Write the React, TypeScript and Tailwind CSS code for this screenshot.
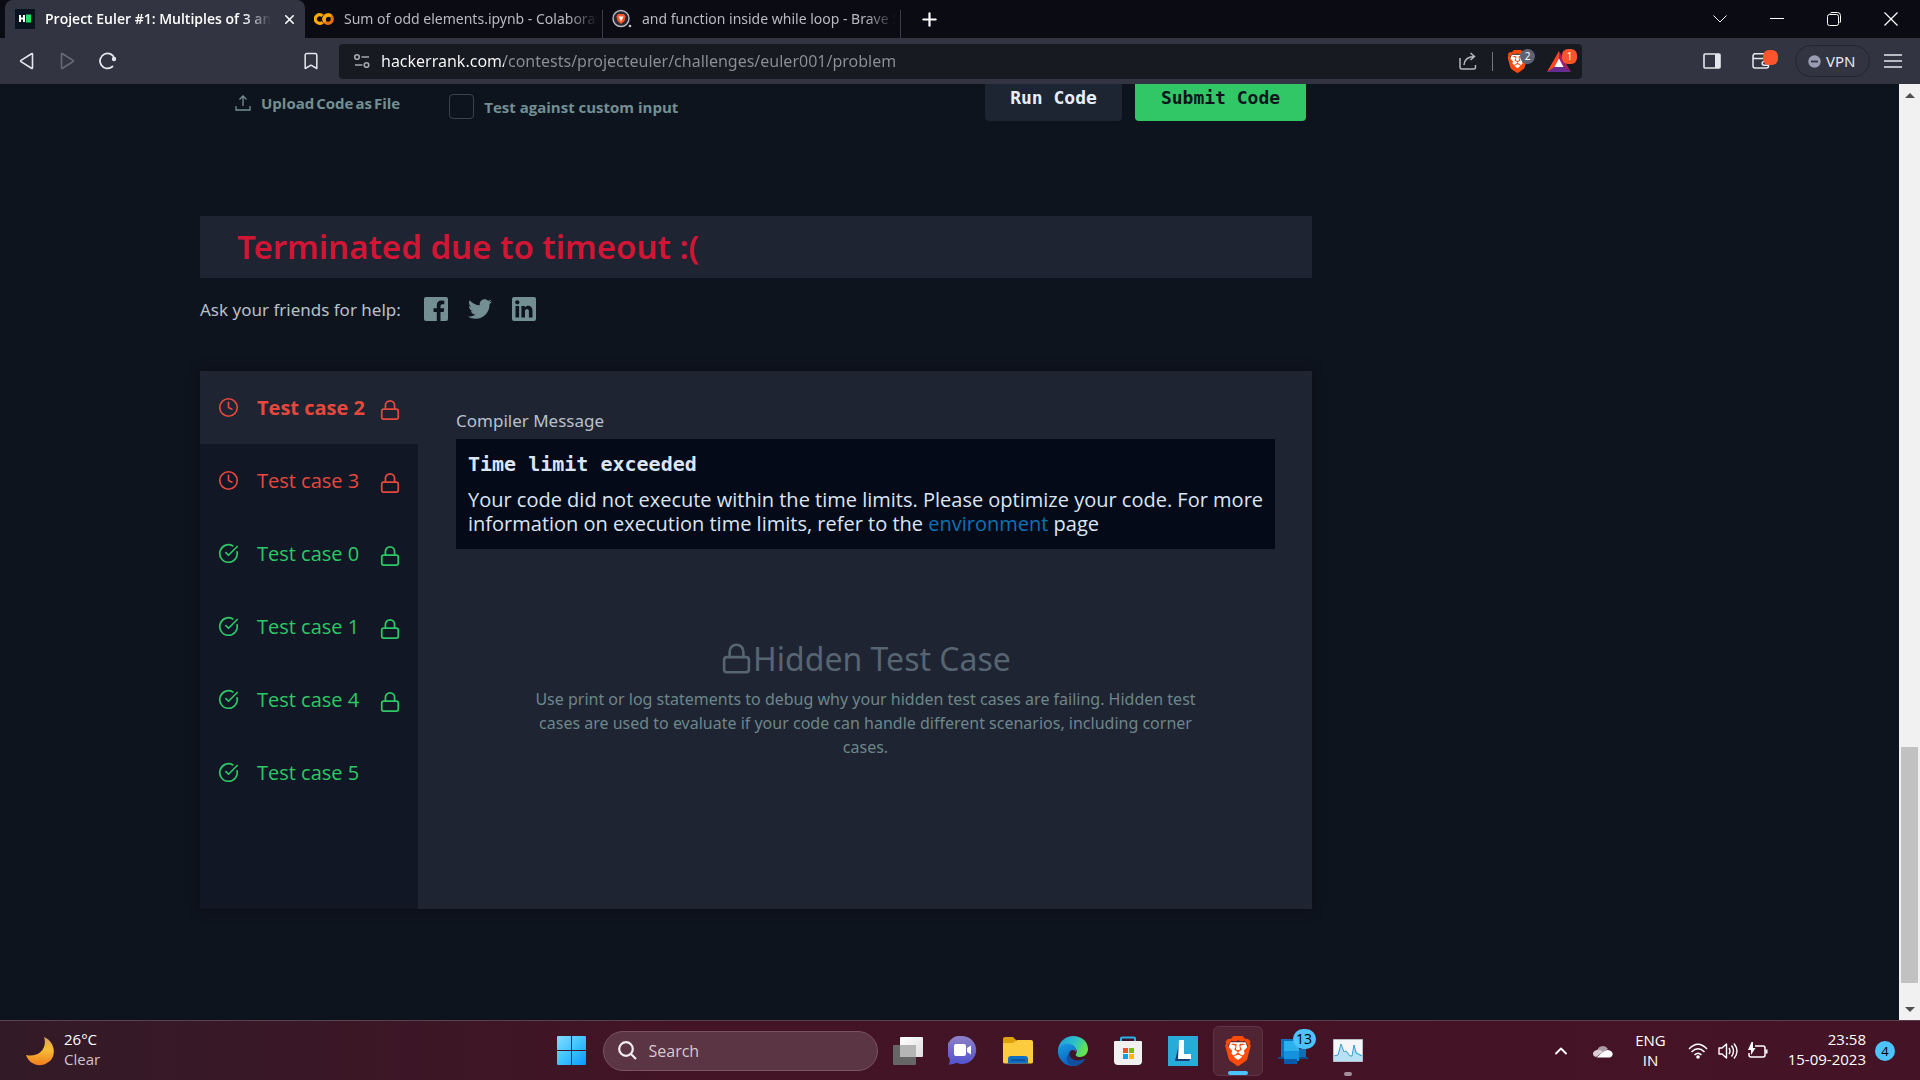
import React from "react";
import { CircleCheckBig, Clock, Lock, Bookmark, X, Plus, ChevronDown, ChevronUp } from "lucide-react";
import { FaTwitter } from "react-icons/fa";
import { SiBrave } from "react-icons/si";

function BraveLion({ size }: { size: number }) {
  return (
    <span className="relative inline-flex">
      <svg className="absolute inset-0" width={size} height={size} viewBox="0 0 24 24" aria-hidden="true">
        <path d="M6 5h12l2 5-3 8-5 4-5-4-3-8z" fill="#fff" />
      </svg>
      <SiBrave size={size} className="relative text-[#fb4b0a]" aria-hidden="true" />
    </span>
  );
}

function HackerRankIcon() {
  return (
    <svg width="20" height="20" viewBox="0 0 20 20" aria-hidden="true">
      <rect width="20" height="20" fill="#0a1420" />
      <path d="M5 6v7M9 6v7M5 9.500h4" stroke="#fff" strokeWidth="2" />
      <rect x="11" y="5.500" width="5" height="8" fill="#1ae26b" />
    </svg>
  );
}

function ColabIcon() {
  return (
    <svg width="20" height="20" viewBox="0 0 20 20" fill="none" strokeWidth="3.200" aria-hidden="true">
      <path d="M8.500 6.800a4.300 4.300 0 1 0 0 6.400" stroke="#f9ab00" />
      <circle cx="14" cy="10" r="4.300" stroke="#e8710a" />
      <path d="M11 13a4.300 4.300 0 0 1 6-6" stroke="#f9ab00" />
    </svg>
  );
}

function BraveSearchIcon() {
  return (
    <svg width="20" height="20" viewBox="0 0 20 20" aria-hidden="true">
      <circle cx="9" cy="9.500" r="8" fill="#fff" fillOpacity=".12" stroke="#b9bac4" strokeWidth="1.400" />
      <path d="M6 5h6l1.500 2.500-1 4.500L9 15l-3.500-3-1-4.500z" fill="#fb542b" />
      <path d="M6.500 7.500h5L9 12.500z" fill="#fff" />
      <circle cx="18" cy="17" r="1.300" fill="#c8c9d0" />
    </svg>
  );
}

const tabs = [
  { title: "Project Euler #1: Multiples of 3 and 5", icon: <HackerRankIcon />, active: true },
  { title: "Sum of odd elements.ipynb - Colaboratory", icon: <ColabIcon />, active: false },
  { title: "and function inside while loop - Brave Search", icon: <BraveSearchIcon />, active: false },
];

function TabStrip() {
  return (
    <div className="flex h-[38px] shrink-0 items-stretch bg-[#0b0b14] pl-[5px]">
      {tabs.map((t) =>
        t.active ? (
          <div key={t.title} className="flex w-[300px] items-center rounded-t-lg bg-[#323442] pr-[6px] pl-[10px]">
            {t.icon}
            <span className="ml-[10px] flex-1 overflow-hidden font-['Open_Sans',sans-serif] text-sm font-semibold whitespace-nowrap text-white [mask-image:linear-gradient(to_right,black_88%,transparent)]">
              {t.title}
            </span>
            <button aria-label="Close tab" className="ml-2 flex h-5 w-5 items-center justify-center text-white">
              <X size={15} strokeWidth={2.5} />
            </button>
          </div>
        ) : (
          <div key={t.title} className="flex w-[298px] items-center">
            <div className="ml-[9px] flex flex-1 items-center gap-[10px] overflow-hidden">
              {t.icon}
              <span className="flex-1 overflow-hidden text-sm whitespace-nowrap text-[#b9bac0] [mask-image:linear-gradient(to_right,black_88%,transparent)]">
                {t.title}
              </span>
            </div>
            <span className="ml-1 h-7 w-px self-end bg-[#3b3c46]" />
          </div>
        ),
      )}
      <button aria-label="New tab" className="ml-4 flex w-6 items-center justify-center text-white">
        <Plus size={21} strokeWidth={2.5} />
      </button>
      <div className="ml-auto flex pr-px text-white">
        <button aria-label="Search tabs" className="flex w-[57px] items-center justify-center">
          <svg width="14" height="8" viewBox="0 0 14 8" fill="none"><path d="M.5.5L7 7 13.500.5" stroke="currentColor" /></svg>
        </button>
        <button aria-label="Minimize" className="flex w-[57px] items-center justify-center">
          <svg width="14" height="14" viewBox="0 0 14 14"><path d="M0 6.500h14" stroke="currentColor" /></svg>
        </button>
        <button aria-label="Restore" className="flex w-[57px] items-center justify-center">
          <svg width="14" height="14" viewBox="0 0 14 14" fill="none" stroke="currentColor">
            <rect x=".5" y="2.500" width="11" height="11" rx="2" />
            <path d="M3 1.500Q3.500.5 5 .5h5.500a3 3 0 0 1 3 3V9q0 1.500-1 2" />
          </svg>
        </button>
        <button aria-label="Close" className="flex w-[57px] items-center justify-center">
          <svg width="14" height="14" viewBox="0 0 14 14"><path d="M.5.5l13 13M13.500.5l-13 13" stroke="currentColor" strokeWidth="1.200" /></svg>
        </button>
      </div>
    </div>
  );
}

function Toolbar() {
  return (
    <div className="flex h-[46px] shrink-0 items-center bg-[#323442] text-[#e6e7ee]">
      <div className="flex w-[339px] shrink-0 items-center pr-[18px] pl-[18px]">
        <button aria-label="Back">
          <svg width="18" height="18" viewBox="0 0 18 18" fill="none" stroke="currentColor" strokeWidth="1.600" strokeLinejoin="round">
            <path d="M14.500 2.200v13.600q0 1-1 .4L3 9.600q-.8-.6 0-1.200L13.500 1.800q1-.6 1 .4z" />
          </svg>
        </button>
        <button aria-label="Forward" className="ml-[22px] text-[#686a78]">
          <svg width="18" height="18" viewBox="0 0 18 18" fill="none" stroke="currentColor" strokeWidth="1.600" strokeLinejoin="round">
            <path d="M3.500 2.200v13.600q0 1 1 .4L15 9.600q.8-.6 0-1.200L4.500 1.800q-1-.6-1 .4z" />
          </svg>
        </button>
        <button aria-label="Reload" className="ml-[22px]">
          <svg width="20" height="18" viewBox="0 0 20 18" fill="none" stroke="currentColor" strokeWidth="1.800">
            <path d="M14.500 14.500A7.500 7.500 0 1 1 16.800 7" strokeLinecap="round" />
            <circle cx="16" cy="7" r="2.200" fill="currentColor" stroke="none" />
          </svg>
        </button>
        <button aria-label="Bookmark this page" className="ml-auto">
          <Bookmark size={20} strokeWidth={1.8} />
        </button>
      </div>
      <div className="flex h-[35px] flex-1 items-center rounded bg-[#181a21] pr-[5px] pl-[14px]">
        <svg width="18" height="18" viewBox="0 0 18 18" fill="none" stroke="#a4a6b0" strokeWidth="1.600" aria-hidden="true">
          <circle cx="4" cy="5" r="2.300" /><path d="M8.500 5H16M2 13h7.500" /><circle cx="13.500" cy="13" r="2.300" />
        </svg>
        <input
          aria-label="Address"
          defaultValue="hackerrank.com/contests/projecteuler/challenges/euler001/problem"
          className="ml-[10px] min-w-0 flex-1 bg-[linear-gradient(to_right,#ffffff_123px,#8d8f98_123px)] bg-clip-text text-base text-transparent outline-none"
        />
        <button aria-label="Share" className="text-[#b5b6be]">
          <svg width="18" height="18" viewBox="0 0 18 18" fill="none" stroke="currentColor" strokeWidth="1.500">
            <path d="M1 6v9q0 2 2 2h12q1.500 0 1.500-2v-2" /><path d="M5 13Q5.500 5 15 4.500M11.500 1l4 3.500-4 3.500" />
          </svg>
        </button>
        <span className="mr-[13px] ml-[15px] h-[19px] w-px bg-[#747681]" />
        <button aria-label="Brave Shields" className="relative flex w-[29px] items-center">
          <BraveLion size={23} />
          <span className="absolute -top-px right-0 flex h-[15px] w-[15px] items-center justify-center rounded-full bg-[#5f6273] text-[10px] text-white">2</span>
        </button>
        <button aria-label="Brave Rewards" className="relative ml-3 flex w-[30px] items-center">
          <svg width="24" height="21" viewBox="0 0 24 21">
            <path d="M12 0L0 21l12-7z" fill="#ff4724" /><path d="M12 0l12 21-12-7z" fill="#9e1f63" /><path d="M0 21h24l-12-8z" fill="#662d91" /><path d="M12 7.500L16.500 16h-9z" fill="#fff" />
          </svg>
          <span className="absolute -top-[2px] right-0 flex h-[15px] w-[15px] items-center justify-center rounded-md bg-[#fc542c] text-[10px] text-white">1</span>
        </button>
      </div>
      <div className="flex w-[338px] shrink-0 items-center pr-[18px]">
        <button aria-label="Sidebar" className="ml-auto">
          <svg width="18" height="18" viewBox="0 0 18 18"><rect x="1" y="2" width="16" height="14" rx="1" fill="none" stroke="currentColor" strokeWidth="1.600" /><path d="M12 2h5v14h-5z" fill="currentColor" /></svg>
        </button>
        <button aria-label="Wallet" className="relative ml-[31px] w-[26px]">
          <svg width="18" height="18" viewBox="0 0 18 18" fill="none" stroke="currentColor" strokeWidth="1.500">
            <path d="M1 3.500v10.500q0 2 2 2h11.500q2 0 2-2V6.500H2.500Q1 6.500 1 4.500T2.500 1.800H15" /><path d="M16.500 9.500H12a1.800 1.800 0 0 0 0 3.700h4.500" />
          </svg>
          <span className="absolute -top-[2px] right-0 h-[15px] w-[15px] rounded-md bg-[#fc542c]" />
        </button>
        <button className="ml-[17px] flex h-8 w-[75px] items-center gap-[5px] rounded-full border border-[#232531] pl-3 text-[15px]">
          <svg width="13" height="13" viewBox="0 0 13 13" aria-hidden="true"><circle cx="6.500" cy="6.500" r="6.200" fill="#9a9cb4" /><path d="M3 6.500h7" stroke="#323442" strokeWidth="1.800" /></svg>
          VPN
        </button>
        <button aria-label="Menu" className="ml-[14px]">
          <svg width="18" height="14" viewBox="0 0 18 14"><path d="M0 1h18M0 7h18M0 13h18" stroke="currentColor" strokeWidth="1.500" /></svg>
        </button>
      </div>
    </div>
  );
}

const cases = [
  { name: "Test case 2", passed: false, locked: true },
  { name: "Test case 3", passed: false, locked: true },
  { name: "Test case 0", passed: true, locked: true },
  { name: "Test case 1", passed: true, locked: true },
  { name: "Test case 4", passed: true, locked: true },
  { name: "Test case 5", passed: true, locked: false },
];

function Results() {
  return (
    <section className="mt-11 flex h-[538px] bg-[#1e2431] shadow-[0_0_12px_rgba(0,0,0,0.35)]">
      <div role="tablist" aria-label="Test cases" className="w-[218px] shrink-0 bg-[#111725]">
        {cases.map((c, i) => (
          <button
            key={c.name}
            role="tab"
            aria-selected={i === 0}
            className={`flex h-[73px] w-full items-center pl-[18px] font-['Open_Sans',sans-serif] text-xl ${i === 0 ? "bg-[#1e2431] font-bold" : ""} ${c.passed ? "text-[#2ec866]" : "text-[#e5493d]"}`}
          >
            {c.passed ? <CircleCheckBig size={21} strokeWidth={1.9} /> : <Clock size={21} strokeWidth={1.9} />}
            <span className="ml-[18px] w-[122px] text-left">{c.name}</span>
            {c.locked && <Lock size={22} strokeWidth={1.9} className="mt-1" />}
          </button>
        ))}
      </div>
      <div className="min-w-0 flex-1 pt-[38px] pr-[37px] pl-[38px]">
        <h2 className="text-[17px] leading-6 text-[#b8c0cc]">Compiler Message</h2>
        <div className="mt-[6px] bg-[#040a18] pt-[13px] pr-2 pb-[13px] pl-3 text-[#dbe5f5]">
          <p className="font-['DejaVu_Sans_Mono',monospace] text-xl leading-6 font-bold">Time limit exceeded</p>
          <p className="mt-3 font-['Open_Sans',sans-serif] text-xl leading-6">
            Your code did not execute within the time limits. Please optimize your code. For more information on
            execution time limits, refer to the <a href="#environment" className="text-[#0b72b5]">environment</a> page
          </p>
        </div>
        <div className="mx-auto mt-[83px] max-w-[680px] text-center">
          <h3 className="mb-[2px] flex items-center justify-center text-[32px] leading-[53px] text-[#566571]">
            <Lock size={33} strokeWidth={1.9} />
            Hidden Test Case
          </h3>
          <p className="text-base leading-6 text-[#6d868b]">
            Use print or log statements to debug why your hidden test cases are failing. Hidden test cases are used to
            evaluate if your code can handle different scenarios, including corner cases.
          </p>
        </div>
      </div>
    </section>
  );
}

function Page() {
  return (
    <main className="min-w-0 flex-1 overflow-hidden bg-[#0e141e] px-[200px]">
      <div className="w-full max-w-[1112px]">
        <div className="flex h-[38px] items-start pr-[6px] pl-[35px] font-['Open_Sans',sans-serif] text-[#738f93]">
          <button className="mt-[7px] flex items-center gap-[10px] text-[15px] leading-6 font-bold">
            <svg width="16" height="16" viewBox="0 0 16 16" fill="none" stroke="currentColor" strokeWidth="1.300" aria-hidden="true">
              <path d="M8 11V1M4.500 4.500L8 1l3.500 3.500M1 11v4h14v-4" />
            </svg>
            <span className="flex gap-0.5">
              <span>Upload</span>
              <span>Code</span>
              <span>as</span>
              <span>File</span>
            </span>
          </button>
          <label className="mt-[10px] ml-[49px] flex items-center gap-[10px] text-[15px] leading-6 font-bold">
            <input type="checkbox" className="h-[25px] w-[25px] appearance-none rounded border border-[#39424e]" />
            Test against custom input
          </label>
          <div className="ml-auto flex gap-[13px] font-['DejaVu_Sans_Mono',monospace] text-lg font-bold">
            <button className="h-[37px] w-[137px] rounded-b-sm bg-[#1d2532] pb-[10px] text-[#e7eefb]">Run Code</button>
            <button className="h-[37px] w-[171px] rounded-b-sm bg-[#32c766] pb-[10px] text-[#0e141e]">Submit Code</button>
          </div>
        </div>
        <div className="mt-[94px] flex h-[62px] items-center bg-[#1e2431] pl-[37px]">
          <h1 className="text-[33px] font-semibold text-[#d11534]">Terminated due to timeout :(</h1>
        </div>
        <div className="mt-[14px] flex h-[35px] items-center text-[17px] text-[#b8c0cc]">
          Ask your friends for help:
          <span className="mb-[2px] ml-[23px] flex items-center gap-5 text-[#738f93]">
            <a href="#facebook" aria-label="Facebook">
              <svg width="24" height="24" viewBox="0 0 24 24" fill="currentColor"><path d="M2 0h20q2 0 2 2v20q0 2-2 2h-5.500v-9h3.200l.5-3.800h-3.700V9q0-1.800 1.800-1.800h2V3.800q-1-.2-2.800-.2-4.700 0-4.700 4.800v2.800H9.500V15h3.300v9H2q-2 0-2-2V2q0-2 2-2z" /></svg>
            </a>
            <a href="#twitter" aria-label="Twitter"><FaTwitter size={24} /></a>
            <a href="#linkedin" aria-label="LinkedIn">
              <svg width="24" height="24" viewBox="0 0 24 24"><rect width="24" height="24" rx="2" fill="currentColor" /><path d="M3.500 9h3.600v11.500H3.500zM9.400 9h3.400v1.600c2-3 7.700-2.500 7.700 3v6.900h-3.600v-6.200c0-3.200-3.900-3-3.900 0v6.200H9.400z" fill="#0e141e" /><circle cx="5.300" cy="5.300" r="2.100" fill="#0e141e" /></svg>
            </a>
          </span>
        </div>
        <Results />
      </div>
    </main>
  );
}

function Scrollbar() {
  return (
    <div aria-hidden="true" className="flex w-[21px] shrink-0 flex-col items-center bg-[#f1f1f1]">
      <svg className="h-[21px]" width="10" viewBox="0 0 10 21"><path d="M0 14h10L5 9z" fill="#505050" /></svg>
      <div className="grow-[642]" />
      <div className="w-[17px] grow-[236] bg-[#c1c1c1]" />
      <div className="grow-[16]" />
      <svg className="h-[21px]" width="10" viewBox="0 0 10 21"><path d="M0 8h10l-5 5z" fill="#505050" /></svg>
    </div>
  );
}

const slot = "relative flex h-[50px] w-[50px] items-center justify-center rounded-md";

function Taskbar() {
  return (
    <footer className="grid h-[60px] shrink-0 grid-cols-[1fr_auto_1fr] items-center border-t border-[#5b4150] bg-[linear-gradient(to_right,#331a27,#421425_35%,#451326)] font-['Open_Sans',sans-serif] text-white">
      <button className="flex items-center gap-[10px] justify-self-start pl-[26px] text-left text-[15px] leading-5">
        <svg width="28" height="34" viewBox="0 0 28 34" aria-hidden="true">
          <defs><linearGradient id="moon" x1="0" y1="0" x2="0" y2="1"><stop offset="0" stopColor="#d9a05c" /><stop offset=".45" stopColor="#f6bd36" /><stop offset="1" stopColor="#f27d1e" /></linearGradient></defs>
          <path d="M18 3C30 8 31 24 21 29 13 34 3 30 0 21 12 24 22 15 18 3z" fill="url(#moon)" />
        </svg>
        <span className="pb-1">26°C<br /><span className="text-[#cfc5ca]">Clear</span></span>
      </button>
      <div className="flex items-center gap-[5px] pr-px">
        <button aria-label="Start" className={slot}>
          <svg width="29" height="29" viewBox="0 0 29 29">
            <defs><linearGradient id="win" x1="0" y1="0" x2="1" y2="1"><stop offset="0" stopColor="#84dcff" /><stop offset=".5" stopColor="#3fc4ff" /><stop offset="1" stopColor="#0a97ff" /></linearGradient></defs>
            <path d="M0 1q0-1 1-1h13v14H0zM15 0h13q1 0 1 1v13H15zM0 15h14v14H1q-1 0-1-1zM15 15h14v13q0 1-1 1H15z" fill="url(#win)" />
          </svg>
        </button>
        <label className="ml-px flex h-10 w-[275px] items-center gap-3 rounded-full border border-[#795363] bg-[#5b3544] pl-[14px]">
          <svg width="19" height="19" viewBox="0 0 19 19" fill="none" stroke="#f3edf0" strokeWidth="2.200" aria-hidden="true"><circle cx="8" cy="8" r="6.800" /><path d="M13 13l5 5" /></svg>
          <input aria-label="Search" placeholder="Search" className="w-40 bg-transparent text-base text-white outline-none placeholder:text-[#d6c9cf]" />
        </label>
        <button aria-label="Task view" className={slot}>
          <svg width="30" height="28" viewBox="0 0 30 28"><defs><linearGradient id="tv" x1="0" y1="0" x2="1" y2="1"><stop offset="0" stopColor="#fff" /><stop offset="1" stopColor="#dedede" /></linearGradient></defs><rect y="8" width="23" height="20" rx="1" fill="#666" /><rect x="7" width="23" height="20" rx="1" fill="url(#tv)" /><path d="M7 8h16v12H7z" fill="#b5b5b5" /></svg>
        </button>
        <button aria-label="Chat" className={slot}>
          <svg width="29" height="29" viewBox="0 0 29 29"><defs><linearGradient id="chat" x1="0" y1="0" x2="0" y2="1"><stop offset="0" stopColor="#8f80c6" /><stop offset="1" stopColor="#5152d0" /></linearGradient></defs><path d="M14.500 0a14 14 0 1 1-6 26.800Q5 29 .5 28.500q2-3 1-6A14 14 0 0 1 14.500 0z" fill="url(#chat)" /><rect x="6" y="8" width="12" height="12" rx="2" fill="#fff" /><path d="M19 12l4-2.500v9L19 16z" fill="#fff" /></svg>
        </button>
        <button aria-label="File Explorer" className={slot}>
          <svg width="30" height="27" viewBox="0 0 30 27"><path d="M0 2q0-2 2-2h8l3 3v6H0z" fill="#dda10a" /><path d="M0 6h10l4-3h14q2 0 2 2v20q0 1.500-2 1.500H2q-2 0-2-1.500z" fill="#fdcb3e" /><path d="M5 26.500V22q0-3 3-3h14q3 0 3 3v4.500z" fill="#0f6fc5" /><path d="M8 23h14" stroke="#0a4c91" strokeWidth="1.500" /></svg>
        </button>
        <button aria-label="Microsoft Edge" className={slot}>
          <svg width="30" height="30" viewBox="0 0 30 30">
            <defs>
              <linearGradient id="e1" x1="0" y1="0" x2="1" y2=".4"><stop offset="0" stopColor="#1898dd" /><stop offset=".6" stopColor="#2fc2c7" /><stop offset="1" stopColor="#62e34f" /></linearGradient>
              <linearGradient id="e2" x1="0" y1="0" x2=".4" y2="1"><stop offset="0" stopColor="#1b9be4" /><stop offset="1" stopColor="#0a63bd" /></linearGradient>
            </defs>
            <path d="M0 14C1 5 8 0 15 0c8 0 15 5 15 13 0 5-4 8-8 8-3 0-5-1-4-3 2-3 0-8-6-8C6 10 2 11 0 14z" fill="url(#e1)" />
            <path d="M0 14C3 8 8 7 12 8c4 1 7 4 6 8-2-4-8-2-7 4 1 6 6 9 9 9-11 4-21-5-20-15z" fill="url(#e2)" />
            <path d="M11.500 17c-1 6 7 10 16 5.500C25 28 18 31 13 29.500 7 26 8 20 11.500 17z" fill="#134fa0" />
          </svg>
        </button>
        <button aria-label="Microsoft Store" className={slot}>
          <svg width="30" height="30" viewBox="0 0 30 30"><path d="M8 6V2.500Q8 1.500 9 1.500h12q1 0 1 1V6" fill="none" stroke="#28b2ea" strokeWidth="2" /><path d="M1 6q0-1 1-1h26q1 0 1 1v19q0 4-4 4H5q-4 0-4-4z" fill="#f1f1f1" /><path d="M10 12h5v5h-5z" fill="#f25022" /><path d="M16 12h5v5h-5z" fill="#7fba00" /><path d="M10 18h5v5h-5z" fill="#00a4ef" /><path d="M16 18h5v5h-5z" fill="#ffb900" /></svg>
        </button>
        <button aria-label="L app" className={slot}>
          <svg width="30" height="30" viewBox="0 0 30 30"><path d="M0 0h30v30H0z" fill="#27acda" /><path d="M12 4l-5 21h14l2-3H11z" fill="#183f73" /><path d="M11 4h5v14h7v5H10z" fill="#fff" /></svg>
        </button>
        <button aria-label="Brave" className="relative flex h-[50px] w-[50px] items-center justify-center rounded-md border border-[#603447] bg-[#512434]">
          <BraveLion size={30} />
          <span className="absolute bottom-0 h-1 w-5 rounded-full bg-[#4cc2ff]" />
        </button>
        <button aria-label="Phone Link" className={slot}>
          <svg width="30" height="28" viewBox="0 0 30 28"><path d="M3 2h15v18H3z" fill="#0d71bd" /><path d="M0 20h30v2H0z" fill="#0b4c87" /><path d="M6 4h15v20H6z" fill="#2ab1ea" /><path d="M6 14h15v10H6z" fill="#1592dd" /><path d="M6 22h13v5H6z" fill="#075aa9" /><path d="M21 12h7v8h-7z" fill="#116fb8" /></svg>
          <span className="absolute top-[3px] right-[2px] flex h-5 w-[23px] items-center justify-center rounded-full bg-[#4cc2ff] text-sm text-black">13</span>
        </button>
        <button aria-label="Resource Monitor" className={slot}>
          <svg width="30" height="23" viewBox="0 0 30 23"><path d="M.5.5h29v22H.5z" fill="#f4f6f8" stroke="#b9bec4" /><path d="M1 18l4-2L8 5l3 9 3-2 3 5h2l2-11 3 7 5 3v6H1z" fill="#b9e1f5" /><path d="M1 17l4-1L8 5l3 8 2-1 4 5h2l2-11 2 8 6 3" fill="none" stroke="#3a9bd2" /></svg>
          <span className="absolute bottom-0 h-1 w-2 rounded-full bg-[#a38d98]" />
        </button>
      </div>
      <div className="flex items-center justify-self-end pr-[25px] text-[15px] leading-5">
        <button aria-label="Show hidden icons"><ChevronUp size={20} strokeWidth={2.2} /></button>
        <svg className="ml-[22px]" width="20" height="14" viewBox="0 0 20 14" aria-hidden="true"><path d="M4 7a6 6 0 0 1 11-2l-8 5z" fill="#a99ba3" /><path d="M4 6q3-1 6 2l-7 5Q0 12 0 9.500T4 6z" fill="#d8cfd4" /><path d="M3.500 13.500L10 8q5-4 9 0 2 4-2 5.500z" fill="#fff" /></svg>
        <button className="ml-[22px] pb-[2px] text-center">ENG<br />IN</button>
        <div className="ml-[22px] flex items-center gap-[10px]">
          <svg width="20" height="16" viewBox="0 0 20 16" fill="none" stroke="currentColor" strokeWidth="1.500" aria-hidden="true"><path d="M1 6q9-9.500 18 0M3.500 9q6.500-6.500 13 0M6.500 12q3.500-3.500 7 0" /><circle cx="10" cy="14" r="1.800" fill="currentColor" stroke="none" /></svg>
          <svg width="20" height="18" viewBox="0 0 20 18" fill="none" stroke="currentColor" strokeWidth="1.400" aria-hidden="true"><path d="M1 6h3l4.500-4v14L4 12H1z" strokeLinejoin="round" /><path d="M11 6q2 3 0 6M13.500 3.500q4 5.500 0 11M16 1.500q6 7.500 0 15" /></svg>
          <svg width="20" height="18" viewBox="0 0 20 18" fill="none" stroke="currentColor" strokeWidth="1.500" aria-hidden="true"><path d="M7 4h8q2 0 2 2v7q0 2-2 2H3q-2 0-2-2v-2" /><path d="M18.500 7.500v4" strokeWidth="2" /><path d="M3.500 0L0 8h3v5l4.500-7H5V0z" fill="currentColor" stroke="none" /></svg>
        </div>
        <button className="ml-5 pb-[3px] text-right">23:58<br />15-09-2023</button>
        <span className="ml-[9px] flex h-5 w-5 items-center justify-center rounded-full bg-[#4cc2ff] text-[13px] text-black">4</span>
      </div>
    </footer>
  );
}

export default function App() {
  return (
    <div className="flex h-screen flex-col overflow-hidden font-['Noto_Sans',sans-serif]">
      <TabStrip />
      <Toolbar />
      <div className="flex min-h-0 flex-1">
        <Page />
        <Scrollbar />
      </div>
      <Taskbar />
    </div>
  );
}
